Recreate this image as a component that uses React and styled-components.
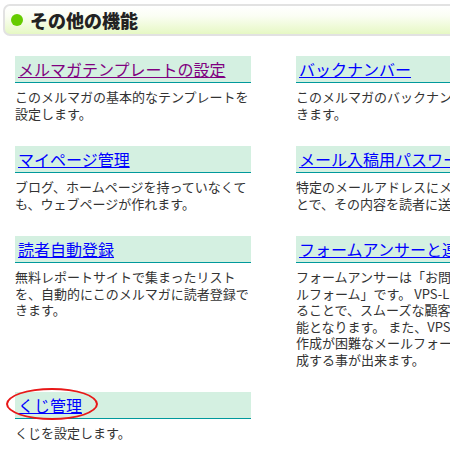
import React from 'react';
import styled, { createGlobalStyle } from 'styled-components';

const GlobalStyle = createGlobalStyle`
  html, body {
    margin: 0;
    padding: 0;
    overflow: hidden;
    background: #fff;
  }
  body {
    font-family: "Noto Sans CJK JP", "Liberation Sans", sans-serif;
    color: #333;
  }
`;

const Page = styled.div`
  width: 620px;
  padding: 4px 0 0 3px;
`;

const TitleBar = styled.div`
  display: flex;
  align-items: center;
  gap: 7px;
  box-sizing: border-box;
  height: 32px;
  padding-left: 6px;
  border: 2px solid #e2e2e2;
  border-radius: 7px;
  background: linear-gradient(to bottom, #ffffff 0%, #fbfef4 35%, #e6f8c4 100%);
`;

const Dot = styled.span`
  width: 12px;
  height: 12px;
  border-radius: 50%;
  background: #66cc00;
  flex: none;
`;

const Title = styled.h2`
  margin: 0;
  font-size: 18px;
  font-weight: 900;
  line-height: 28px;
  color: #222;
`;

const Grid = styled.div`
  display: grid;
  grid-template-columns: 236px 236px;
  column-gap: 45px;
  row-gap: 24px;
  align-items: start;
  margin: 20px 0 0 12px;
`;

const Card = styled.div`
  display: flex;
  flex-direction: column;
`;

const CardHead = styled.div`
  position: relative;
  height: 26px;
  padding: 0 3px;
  background: #d4f0e1;
  border-bottom: 1px solid #00999c;
  font-size: 16px;
  line-height: 26px;
`;

const Link = styled.a`
  color: ${props => (props.visited ? '#800080' : '#0000ff')};
  text-decoration: underline;
  white-space: nowrap;
`;

const Circle = styled.span`
  position: absolute;
  left: -9px;
  top: -4px;
  width: 88px;
  height: 28px;
  border: 2px solid #e81818;
  border-radius: 50%;
  pointer-events: none;
`;

const Desc = styled.p`
  margin: 6px 0 0;
  font-size: 13px;
  line-height: 16.5px;
  color: #333;
  white-space: pre-line;
`;

const features = [
  {
    title: 'メルマガテンプレートの設定',
    text: 'このメルマガの基本的なテンプレートを設定します。',
    visited: true,
  },
  {
    title: 'バックナンバー',
    text: 'このメルマガのバックナンバーを公開できます。',
  },
  {
    title: 'マイページ管理',
    text: 'ブログ、ホームページを持っていなくても、ウェブページが作れます。',
  },
  {
    title: 'メール入稿用パスワード設定',
    text: '特定のメールアドレスにメールを送ることで、その内容を読者に送信できます。',
  },
  {
    title: '読者自動登録',
    text: '無料レポートサイトで集まったリストを、自動的にこのメルマガに読者登録できます。',
  },
  {
    title: 'フォームアンサーと連携',
    text:
      'フォームアンサーは「お問い合わせメー\n' +
      'ルフォーム」です。 VPS-LINKと連携す\n' +
      'ることで、スムーズな顧客管理が可\n' +
      '能となります。 また、VPS-LINKでは\n' +
      '作成が困難なメールフォームを簡単に作\n' +
      '成する事が出来ます。',
  },
  {
    title: 'くじ管理',
    text: 'くじを設定します。',
    circled: true,
  },
];

const App = () => (
  <Page>
    <GlobalStyle />
    <TitleBar>
      <Dot />
      <Title>その他の機能</Title>
    </TitleBar>
    <Grid>
      {features.map(item => (
        <Card key={item.title}>
          <CardHead>
            <Link href="#" visited={item.visited}>
              {item.title}
            </Link>
            {item.circled && <Circle />}
          </CardHead>
          <Desc>{item.text}</Desc>
        </Card>
      ))}
    </Grid>
  </Page>
);

export default App;
